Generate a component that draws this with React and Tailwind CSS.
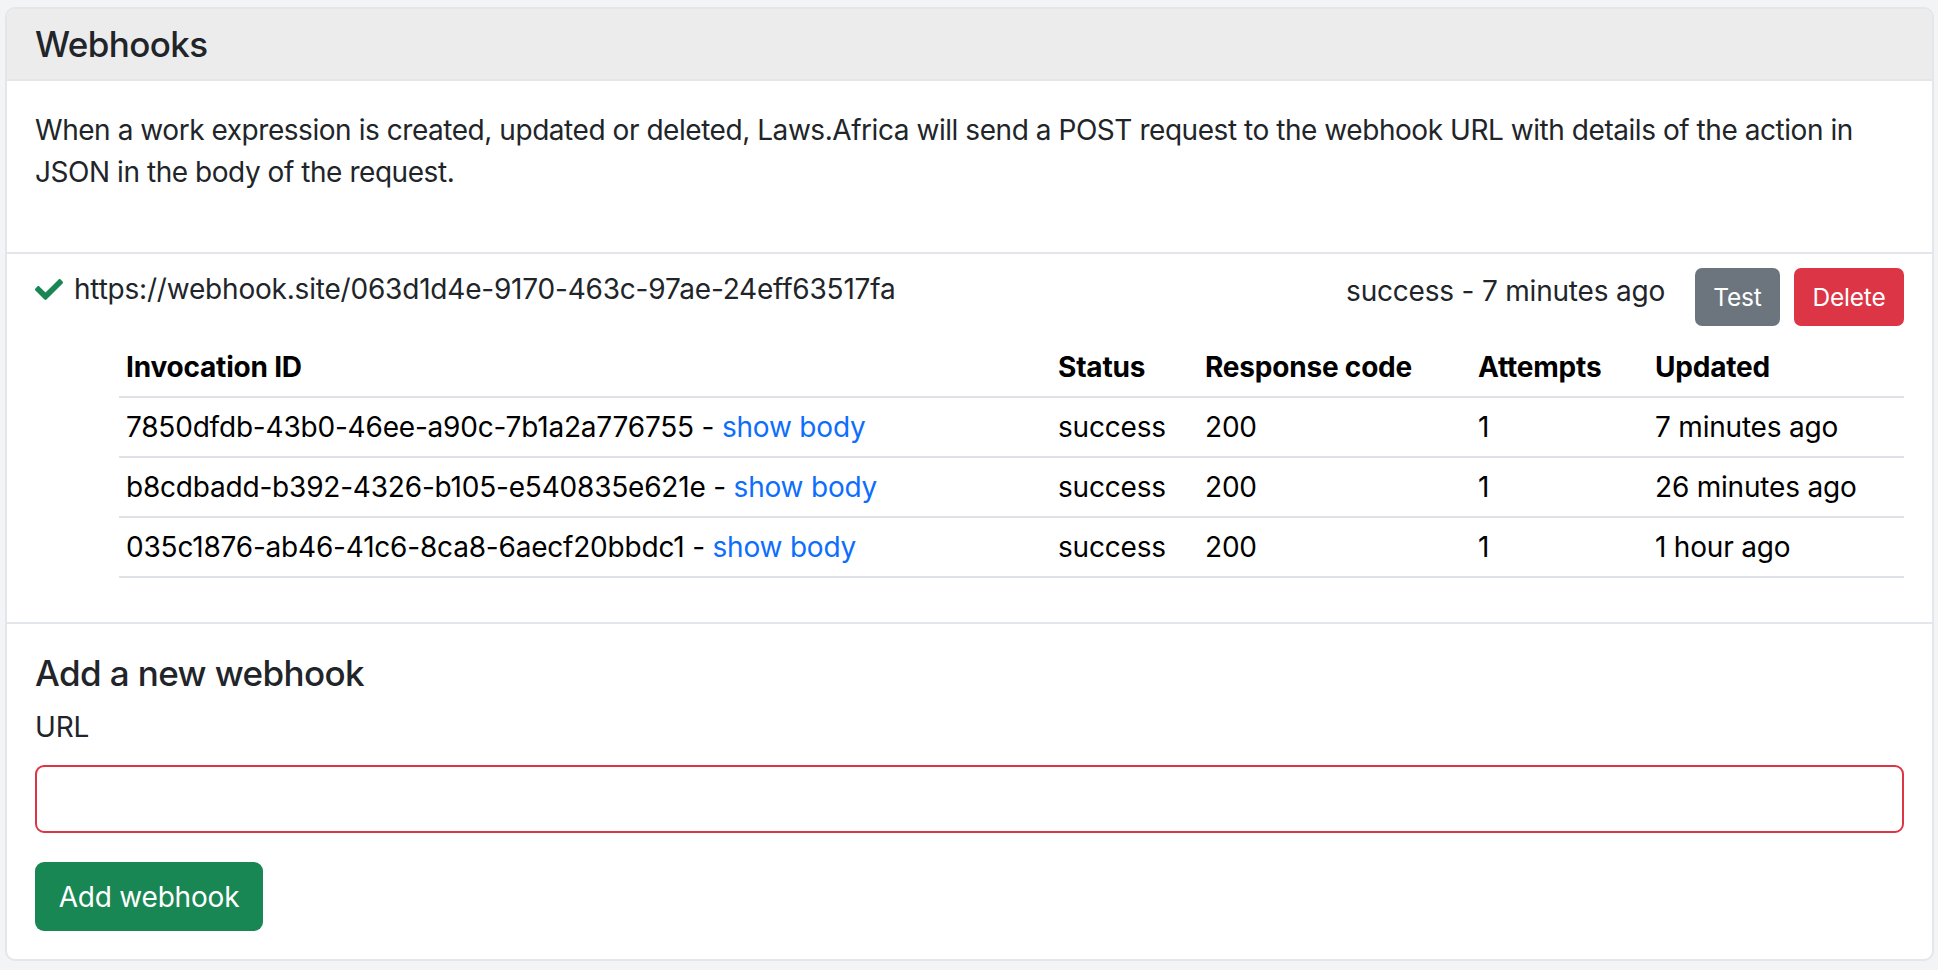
import React from 'react';

const invocations = [
  { id: '7850dfdb-43b0-46ee-a90c-7b1a2a776755', status: 'success', code: '200', attempts: '1', updated: '7 minutes ago' },
  { id: 'b8cdbadd-b392-4326-b105-e540835e621e', status: 'success', code: '200', attempts: '1', updated: '26 minutes ago' },
  { id: '035c1876-ab46-41c6-8ca8-6aecf20bbdc1', status: 'success', code: '200', attempts: '1', updated: '1 hour ago' },
];

function CheckIcon() {
  return (
    <svg viewBox="0 64 512 384" className="w-[28px] h-[21px] shrink-0" fill="#198754">
      <path d="M173.898 439.404l-166.4-166.4c-9.997-9.997-9.997-26.206 0-36.204l36.203-36.204c9.997-9.998 26.207-9.998 36.204 0L192 312.69 432.095 72.596c9.997-9.997 26.207-9.997 36.204 0l36.203 36.204c9.997 9.997 9.997 26.206 0 36.204l-294.4 294.401c-9.998 9.997-26.207 9.997-36.204-.001z" />
    </svg>
  );
}

export default function App() {
  return (
    <div
      className="min-h-screen bg-[#f3f4f6] pl-[5px] pr-[4px] pt-[7px] pb-[8px] text-[#212529] tracking-[-0.2px]"
      style={{ fontFamily: 'Inter, "Noto Sans", sans-serif' }}
    >
      <div className="bg-white border-2 border-[#e3e6ea] rounded-[10px] overflow-hidden">
        {/* header */}
        <div className="bg-[#ececec] border-b-2 border-[#e3e6ea] px-[28px] py-[14px]">
          <h5 className="text-[35px] leading-[42px] font-medium tracking-[-0.6px]">Webhooks</h5>
        </div>

        {/* intro */}
        <div className="px-[28px] pt-[28px] pb-[31px]">
          <p className="text-[28px] leading-[42px] mb-[28px] tracking-[-0.45px]">
            When a work expression is created, updated or deleted, Laws.Africa will send a POST request to the webhook URL with
            details of the action in JSON in the body of the request.
          </p>
        </div>

        {/* existing webhook */}
        <div className="border-t-2 border-[#e3e6ea] px-[28px] pt-[14px] pb-[14px]">
          <div className="flex items-start justify-between">
            <div className="flex items-center gap-[11px] h-[42px] text-[28px]">
              <CheckIcon />
              <span>https://webhook.site/063d1d4e-9170-463c-97ae-24eff63517fa</span>
            </div>
            <div className="flex items-start">
              <span className="text-[28px] leading-[42px] mr-[30px] mt-[2px]">success - 7 minutes ago</span>
              <button className="h-[58px] w-[85px] bg-[#6c757d] text-white text-[24.5px] rounded-[7px]">Test</button>
              <button className="h-[58px] w-[110px] ml-[14px] bg-[#dc3545] text-white text-[24.5px] rounded-[7px]">
                Delete
              </button>
            </div>
          </div>

          <div className="ml-[84px] mt-[12px] mb-[30px]">
            <table className="w-full table-fixed text-[28px] leading-[42px] text-black">
              <colgroup>
                <col className="w-[932px]" />
                <col className="w-[147px]" />
                <col className="w-[273px]" />
                <col className="w-[177px]" />
                <col />
              </colgroup>
              <thead>
                <tr className="border-b-2 border-[#dee2e6]">
                  {['Invocation ID', 'Status', 'Response code', 'Attempts', 'Updated'].map((h) => (
                    <th key={h} className="text-left font-bold px-[7px] py-[8px] h-[58px]">
                      {h}
                    </th>
                  ))}
                </tr>
              </thead>
              <tbody>
                {invocations.map((row) => (
                  <tr key={row.id} className="border-b-2 border-[#dee2e6]">
                    <td className="px-[7px] py-[8px] whitespace-nowrap">
                      {row.id} - <a className="text-[#0d6efd]">show body</a>
                    </td>
                    <td className="px-[7px] py-[8px]">{row.status}</td>
                    <td className="px-[7px] py-[8px]">{row.code}</td>
                    <td className="px-[7px] py-[8px]">{row.attempts}</td>
                    <td className="px-[7px] py-[8px] whitespace-nowrap">{row.updated}</td>
                  </tr>
                ))}
              </tbody>
            </table>
          </div>
        </div>

        {/* add new */}
        <div className="border-t-2 border-[#e3e6ea] px-[28px] pt-[28px] pb-[28px]">
          <h5 className="text-[35px] leading-[42px] font-medium mb-[12px] tracking-[-0.6px]">Add a new webhook</h5>
          <label className="block text-[28px] leading-[42px] mb-[17px]">URL</label>
          <input type="text" className="block w-full h-[68px] border-2 border-[#dc3545] rounded-[9px] px-[21px] text-[28px] outline-none" />
          <button className="mt-[29px] h-[69px] w-[228px] bg-[#198754] text-white text-[28px] rounded-[9px]">Add webhook</button>
        </div>
      </div>
    </div>
  );
}
